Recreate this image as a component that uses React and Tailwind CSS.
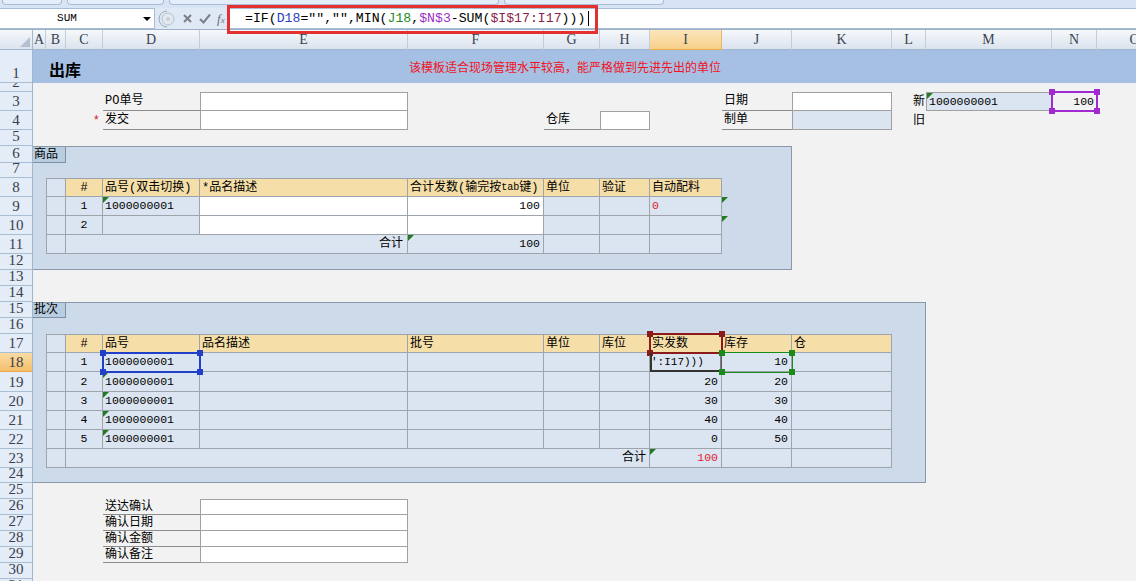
import React from "react";

const ROWS = [
  { n: 1, h: "h-[33px]" }, { n: 2, h: "h-[9px]" }, { n: 3, h: "h-[19px]" }, { n: 4, h: "h-[19px]" },
  { n: 5, h: "h-[16px]" }, { n: 6, h: "h-[17px]" }, { n: 7, h: "h-[15px]" }, { n: 8, h: "h-[19px]" },
  { n: 9, h: "h-[19px]" }, { n: 10, h: "h-[19px]" }, { n: 11, h: "h-[19px]" }, { n: 12, h: "h-[16px]" },
  { n: 13, h: "h-[16px]" }, { n: 14, h: "h-[16px]" }, { n: 15, h: "h-[16px]" }, { n: 16, h: "h-[16px]" },
  { n: 17, h: "h-[19px]" }, { n: 18, h: "h-[19px]", on: true }, { n: 19, h: "h-[20px]" }, { n: 20, h: "h-[19px]" },
  { n: 21, h: "h-[19px]" }, { n: 22, h: "h-[19px]" }, { n: 23, h: "h-[19px]" }, { n: 24, h: "h-[15px]" },
  { n: 25, h: "h-[16px]" }, { n: 26, h: "h-[16px]" }, { n: 27, h: "h-[16px]" }, { n: 28, h: "h-[16px]" },
  { n: 29, h: "h-[16px]" }, { n: 30, h: "h-[16px]" }, { n: 31, h: "h-[16px]" },
];

const COLS = [
  { l: "A", w: "w-[13px]" }, { l: "B", w: "w-[20px]" }, { l: "C", w: "w-[37px]" }, { l: "D", w: "w-[97px]" },
  { l: "E", w: "w-[208px]" }, { l: "F", w: "w-[136px]" }, { l: "G", w: "w-[56px]" }, { l: "H", w: "w-[50px]" },
  { l: "I", w: "w-[72px]", on: true }, { l: "J", w: "w-[70px]" }, { l: "K", w: "w-[100px]" }, { l: "L", w: "w-[34px]" },
  { l: "M", w: "w-[126px]" }, { l: "N", w: "w-[45px]" }, { l: "O", w: "w-[76px]" },
];

const HD = "bg-[#f5dea8]";
const WH = "bg-white";
const CTR = "justify-center";
const RT = "justify-end pr-[3px]";

const Tri = () => (
  <span className="absolute left-0 top-0 w-0 h-0 border-t-[6px] border-r-[6px] border-t-[#217a21] border-r-transparent" />
);

const Num = ({ children, red }) => (
  <span className={`text-[11.5px] ${red ? "text-[#e0202e]" : ""}`}>{children}</span>
);

function Cell({ at, bg = "bg-[#dbe5f1]", edge = "", align = "justify-start pl-[2px]", children }) {
  return (
    <div
      className={`${at} ${bg} ${edge} ${align} relative flex items-center overflow-hidden whitespace-nowrap border-r border-b border-[#9ea4ab]`}
    >
      {children}
    </div>
  );
}

// label with underline (form rows)
const Label = ({ at, children }) => (
  <div className={`${at} flex items-center pl-[2px] border-b border-[#8c8c8c] whitespace-nowrap`}>{children}</div>
);

function Handles({ color }) {
  return (
    <>
      <span className={`absolute -left-[3px] -top-[3px] w-[6px] h-[6px] ${color}`} />
      <span className={`absolute -right-[3px] -top-[3px] w-[6px] h-[6px] ${color}`} />
      <span className={`absolute -left-[3px] -bottom-[3px] w-[6px] h-[6px] ${color}`} />
      <span className={`absolute -right-[3px] -bottom-[3px] w-[6px] h-[6px] ${color}`} />
    </>
  );
}

function TopBar() {
  return (
    <>
      {/* ribbon remnants */}
      <div className="h-[8px] bg-[#d6e4f5] flex gap-[5px] px-[2px]">
        <div className="w-[60px] h-[5px] rounded-b-[4px] border-x border-b border-[#a9bdd6] bg-[#e4eefa]" />
        <div className="w-[97px] h-[5px] rounded-b-[4px] border-x border-b border-[#a9bdd6] bg-[#e4eefa]" />
        <div className="w-[330px] h-[5px] rounded-b-[4px] border-x border-b border-[#a9bdd6] bg-[#e4eefa]" />
        <div className="w-[160px] h-[5px] rounded-b-[4px] border-x border-b border-[#a9bdd6] bg-[#e4eefa]" />
      </div>
      {/* formula bar */}
      <div className="h-[22px] flex bg-[#dfe9f6] border-b border-[#9db1c9]">
        <div className="w-[155px] bg-white border-y border-r border-[#a8bcd4] relative flex items-center">
          <span className="flex-1 text-center pr-[20px] text-[11px] font-['Liberation_Mono',monospace]">SUM</span>
          <span className="absolute right-[3px] top-[8px] w-0 h-0 border-l-[4px] border-r-[4px] border-t-[4px] border-l-transparent border-r-transparent border-t-black" />
        </div>
        <div className="w-[74px] flex items-center gap-[6px] pl-[3px]">
          <svg width="18" height="18" viewBox="0 0 18 18">
            <path d="M9 1 A8 8 0 0 0 9 17" fill="none" stroke="#9aa9ba" />
            <circle cx="10" cy="9" r="6" fill="#e3e8ee" stroke="#b6c0cc" />
            <circle cx="10" cy="9" r="2" fill="#c6ced8" />
          </svg>
          <svg width="11" height="11" viewBox="0 0 11 11">
            <path d="M2 2 L9 9 M9 2 L2 9" stroke="#7b7f86" strokeWidth="2" />
          </svg>
          <svg width="12" height="11" viewBox="0 0 12 11">
            <path d="M1 6 L4.5 9.5 L11 1.5" fill="none" stroke="#7b7f86" strokeWidth="2" />
          </svg>
          <span className="italic font-['Liberation_Serif',serif] text-[13px] text-[#6b6f75] leading-none">
            f<span className="text-[9px]">x</span>
          </span>
        </div>
        <div className="flex-1 bg-white border-l border-y border-[#a8bcd4] flex items-center pl-[15px] font-['Liberation_Mono',monospace] text-[13.2px] whitespace-nowrap">
          <span>=IF(</span>
          <span className="text-[#2a3fc4]">D18</span>
          <span>{'="","",MIN('}</span>
          <span className="text-[#1f8a2a]">J18</span>
          <span>,</span>
          <span className="text-[#9b30c8]">$N$3</span>
          <span>-SUM(</span>
          <span className="text-[#8a1f4a]">$I$17:I17</span>
          <span>)))</span>
          <span className="inline-block w-px h-[15px] bg-black ml-[3px]" />
        </div>
      </div>
    </>
  );
}

function ColumnHeader() {
  return (
    <div className="h-[20px] flex shrink-0 font-['Liberation_Serif',serif] text-[14px] text-[#3a4350]">
      <div className="w-[33px] shrink-0 relative bg-linear-to-b from-[#f6f8fb] to-[#dbe3ee] border-r border-b border-[#9eb6ce]">
        <span className="absolute right-[2px] bottom-[2px] w-0 h-0 border-l-[10px] border-t-[10px] border-l-transparent border-t-transparent border-r-0 border-b-[10px] border-b-[#b3c0d1]" />
      </div>
      {COLS.map((c) => (
        <div
          key={c.l}
          className={`${c.w} shrink-0 flex items-center justify-center border-r border-b ${
            c.on
              ? "bg-linear-to-b from-[#fce6bb] to-[#f7cf88] border-r-[#e2b66a] border-b-[#eeac45]"
              : "bg-linear-to-b from-[#f6f8fb] to-[#dbe3ee] border-r-[#c3cdda] border-b-[#9eb6ce]"
          }`}
        >
          {c.l}
        </div>
      ))}
    </div>
  );
}

function RowHeader() {
  return (
    <div className="w-[33px] shrink-0 flex flex-col border-r border-[#9eb6ce] font-['Liberation_Serif',serif] text-[#36404d]">
      {ROWS.map((r) => (
        <div
          key={r.n}
          className={`${r.h} shrink-0 flex items-end justify-center overflow-hidden border-b ${
            r.on ? "bg-linear-to-b from-[#fbdca4] to-[#f4bf6a] border-[#e7a648]" : "bg-[#e4ecf7] border-[#a9bdd5]"
          }`}
        >
          <span className="text-[15px] leading-none pb-[1px]">{r.n}</span>
        </div>
      ))}
    </div>
  );
}

function Sheet() {
  return (
    <div className="grid grid-cols-[13px_20px_37px_97px_208px_136px_56px_50px_72px_70px_100px_34px_126px_45px_76px] grid-rows-[33px_9px_19px_19px_16px_17px_15px_19px_19px_19px_19px_16px_16px_16px_16px_16px_19px_19px_20px_19px_19px_19px_19px_15px_16px_16px_16px_16px_16px_16px_16px] bg-[#f2f2f2] font-['Liberation_Mono','Noto_Sans_CJK_SC',monospace] text-[12px] text-black leading-[14px]">
      {/* Title band */}
      <div className="col-start-1 col-end-16 row-start-1 bg-[#a6c0e4]" />
      <div className="col-start-2 col-span-4 row-start-1 flex items-center pt-[5px] pl-[3px] font-['Noto_Sans_CJK_SC',sans-serif] font-bold text-[16px]">
        出库
      </div>
      <div className="col-start-6 col-end-10 row-start-1 flex items-center justify-center pt-[4px] text-[#f0141e] whitespace-nowrap">
        该模板适合现场管理水平较高，能严格做到先进先出的单位
      </div>

      {/* Header form */}
      <Label at="col-start-4 row-start-3">PO单号</Label>
      <div className="col-start-5 row-start-3 bg-white border border-[#a0a0a0]" />
      <div className="col-start-3 row-start-4 flex items-center justify-end pr-[3px] text-[#d0202a]">*</div>
      <Label at="col-start-4 row-start-4">发交</Label>
      <div className="col-start-5 row-start-4 bg-white border-x border-b border-[#a0a0a0]" />
      <Label at="col-start-7 row-start-4">仓库</Label>
      <div className="col-start-8 row-start-4 bg-white border border-[#a0a0a0]" />
      <Label at="col-start-10 row-start-3">日期</Label>
      <Label at="col-start-10 row-start-4">制单</Label>
      <div className="col-start-11 row-start-3 bg-white border border-[#a0a0a0]" />
      <div className="col-start-11 row-start-4 bg-[#dbe5f1] border-x border-b border-[#a0a0a0]" />
      <div className="col-start-12 row-start-3 flex items-center justify-end pr-[1px]">新</div>
      <div className="col-start-12 row-start-4 flex items-center justify-end pr-[1px]">旧</div>
      <div className="col-start-13 row-start-3 relative bg-[#dbe5f1] border border-[#a0a0a0] flex items-center pl-[2px]">
        <Tri />
        <Num>1000000001</Num>
      </div>
      <div className="col-start-14 row-start-3 flex items-center justify-end pr-[3px]">
        <Num>100</Num>
      </div>
      <div className="col-start-14 row-start-3 relative">
        <div className="absolute -inset-px border-2 border-[#a02ad0]" />
        <Handles color="bg-[#a02ad0]" />
      </div>

      {/* 商品 panel */}
      <div className="col-start-1 col-end-11 row-start-6 row-end-13 bg-[#ccdaea] border-y border-r border-[#8a98ab]" />
      <div className="col-start-1 col-span-2 row-start-6 mt-px bg-[#b9cde0] border-r border-b border-[#7d8fa6] flex items-center pl-[1px]">
        商品
      </div>

      <Cell at="col-start-2 row-start-8" edge="border-l border-t" />
      <Cell at="col-start-3 row-start-8" bg={HD} edge="border-t" align={CTR}>#</Cell>
      <Cell at="col-start-4 row-start-8" bg={HD} edge="border-t">品号(双击切换)</Cell>
      <Cell at="col-start-5 row-start-8" bg={HD} edge="border-t">*品名描述</Cell>
      <Cell at="col-start-6 row-start-8" bg={HD} edge="border-t">
        合计发数(输完按<span className="text-[10px]">tab</span>键)
      </Cell>
      <Cell at="col-start-7 row-start-8" bg={HD} edge="border-t">单位</Cell>
      <Cell at="col-start-8 row-start-8" bg={HD} edge="border-t">验证</Cell>
      <Cell at="col-start-9 row-start-8" bg={HD} edge="border-t">自动配料</Cell>

      <Cell at="col-start-2 row-start-9" edge="border-l" />
      <Cell at="col-start-3 row-start-9" align={CTR}><Num>1</Num></Cell>
      <Cell at="col-start-4 row-start-9"><Tri /><Num>1000000001</Num></Cell>
      <Cell at="col-start-5 row-start-9" bg={WH} />
      <Cell at="col-start-6 row-start-9" bg={WH} align={RT}><Num>100</Num></Cell>
      <Cell at="col-start-7 row-start-9" />
      <Cell at="col-start-8 row-start-9" />
      <Cell at="col-start-9 row-start-9"><Num red>0</Num></Cell>
      <div className="col-start-10 row-start-9 relative"><Tri /></div>

      <Cell at="col-start-2 row-start-10" edge="border-l" />
      <Cell at="col-start-3 row-start-10" align={CTR}><Num>2</Num></Cell>
      <Cell at="col-start-4 row-start-10" />
      <Cell at="col-start-5 row-start-10" bg={WH} />
      <Cell at="col-start-6 row-start-10" bg={WH} />
      <Cell at="col-start-7 row-start-10" />
      <Cell at="col-start-8 row-start-10" />
      <Cell at="col-start-9 row-start-10" />
      <div className="col-start-10 row-start-10 relative"><Tri /></div>

      <Cell at="col-start-2 row-start-11" edge="border-l" />
      <Cell at="col-start-3 col-span-3 row-start-11" align="justify-end pr-[4px]">合计</Cell>
      <Cell at="col-start-6 row-start-11" align={RT}><Tri /><Num>100</Num></Cell>
      <Cell at="col-start-7 row-start-11" />
      <Cell at="col-start-8 row-start-11" />
      <Cell at="col-start-9 row-start-11" />

      {/* 批次 panel */}
      <div className="col-start-1 col-end-13 row-start-15 row-end-25 bg-[#ccdaea] border-y border-r border-[#8a98ab]" />
      <div className="col-start-1 col-span-2 row-start-15 mt-px bg-[#b9cde0] border-r border-b border-[#7d8fa6] flex items-center pl-[1px]">
        批次
      </div>

      <Cell at="col-start-2 row-start-17" edge="border-l border-t" />
      <Cell at="col-start-3 row-start-17" bg={HD} edge="border-t" align={CTR}>#</Cell>
      <Cell at="col-start-4 row-start-17" bg={HD} edge="border-t">品号</Cell>
      <Cell at="col-start-5 row-start-17" bg={HD} edge="border-t">品名描述</Cell>
      <Cell at="col-start-6 row-start-17" bg={HD} edge="border-t">批号</Cell>
      <Cell at="col-start-7 row-start-17" bg={HD} edge="border-t">单位</Cell>
      <Cell at="col-start-8 row-start-17" bg={HD} edge="border-t">库位</Cell>
      <Cell at="col-start-9 row-start-17" bg={HD} edge="border-t">实发数</Cell>
      <Cell at="col-start-10 row-start-17" bg={HD} edge="border-t">库存</Cell>
      <Cell at="col-start-11 row-start-17" bg={HD} edge="border-t">仓</Cell>

      <Cell at="col-start-2 row-start-18" edge="border-l" />
      <Cell at="col-start-3 row-start-18" align={CTR}><Num>1</Num></Cell>
      <Cell at="col-start-4 row-start-18"><Num>1000000001</Num></Cell>
      <Cell at="col-start-5 row-start-18" />
      <Cell at="col-start-6 row-start-18" />
      <Cell at="col-start-7 row-start-18" />
      <Cell at="col-start-8 row-start-18" />
      <Cell at="col-start-9 row-start-18" align="justify-start pl-[1px]">
        <span className="text-[11px]">':I17)))</span>
      </Cell>
      <Cell at="col-start-10 row-start-18" align={RT}><Num>10</Num></Cell>
      <Cell at="col-start-11 row-start-18" />

      <Cell at="col-start-2 row-start-19" edge="border-l" />
      <Cell at="col-start-3 row-start-19" align={CTR}><Num>2</Num></Cell>
      <Cell at="col-start-4 row-start-19"><Tri /><Num>1000000001</Num></Cell>
      <Cell at="col-start-5 row-start-19" />
      <Cell at="col-start-6 row-start-19" />
      <Cell at="col-start-7 row-start-19" />
      <Cell at="col-start-8 row-start-19" />
      <Cell at="col-start-9 row-start-19" align={RT}><Num>20</Num></Cell>
      <Cell at="col-start-10 row-start-19" align={RT}><Num>20</Num></Cell>
      <Cell at="col-start-11 row-start-19" />

      <Cell at="col-start-2 row-start-20" edge="border-l" />
      <Cell at="col-start-3 row-start-20" align={CTR}><Num>3</Num></Cell>
      <Cell at="col-start-4 row-start-20"><Tri /><Num>1000000001</Num></Cell>
      <Cell at="col-start-5 row-start-20" />
      <Cell at="col-start-6 row-start-20" />
      <Cell at="col-start-7 row-start-20" />
      <Cell at="col-start-8 row-start-20" />
      <Cell at="col-start-9 row-start-20" align={RT}><Num>30</Num></Cell>
      <Cell at="col-start-10 row-start-20" align={RT}><Num>30</Num></Cell>
      <Cell at="col-start-11 row-start-20" />

      <Cell at="col-start-2 row-start-21" edge="border-l" />
      <Cell at="col-start-3 row-start-21" align={CTR}><Num>4</Num></Cell>
      <Cell at="col-start-4 row-start-21"><Tri /><Num>1000000001</Num></Cell>
      <Cell at="col-start-5 row-start-21" />
      <Cell at="col-start-6 row-start-21" />
      <Cell at="col-start-7 row-start-21" />
      <Cell at="col-start-8 row-start-21" />
      <Cell at="col-start-9 row-start-21" align={RT}><Num>40</Num></Cell>
      <Cell at="col-start-10 row-start-21" align={RT}><Num>40</Num></Cell>
      <Cell at="col-start-11 row-start-21" />

      <Cell at="col-start-2 row-start-22" edge="border-l" />
      <Cell at="col-start-3 row-start-22" align={CTR}><Num>5</Num></Cell>
      <Cell at="col-start-4 row-start-22"><Tri /><Num>1000000001</Num></Cell>
      <Cell at="col-start-5 row-start-22" />
      <Cell at="col-start-6 row-start-22" />
      <Cell at="col-start-7 row-start-22" />
      <Cell at="col-start-8 row-start-22" />
      <Cell at="col-start-9 row-start-22" align={RT}><Num>0</Num></Cell>
      <Cell at="col-start-10 row-start-22" align={RT}><Num>50</Num></Cell>
      <Cell at="col-start-11 row-start-22" />

      <Cell at="col-start-2 row-start-23" edge="border-l" />
      <Cell at="col-start-3 col-span-6 row-start-23" align="justify-end pr-[3px]">合计</Cell>
      <Cell at="col-start-9 row-start-23" align={RT}><Tri /><Num red>100</Num></Cell>
      <Cell at="col-start-10 row-start-23" />
      <Cell at="col-start-11 row-start-23" />

      {/* range highlights */}
      <div className="col-start-9 row-start-17 relative">
        <div className="absolute -inset-px border-2 border-[#8b1a1a]" />
        <Handles color="bg-[#8b1a1a]" />
      </div>
      <div className="col-start-9 row-start-18 relative">
        <div className="absolute inset-0 border-l-2 border-b-2 border-r-2 border-l-[#333] border-b-[#333] border-r-[#c050c8]" />
        <span className="absolute -right-[3px] -bottom-[3px] w-[6px] h-[6px] bg-[#e8a8e8] border border-[#c050c8]" />
      </div>
      <div className="col-start-10 row-start-18 relative">
        <div className="absolute -inset-px border border-[#1a8a1a]" />
        <Handles color="bg-[#1a8a1a]" />
      </div>
      <div className="col-start-4 row-start-18 relative">
        <div className="absolute -inset-px border-2 border-[#2040c8]" />
        <Handles color="bg-[#2040c8]" />
      </div>

      {/* Confirmation block */}
      <Label at="col-start-4 row-start-26">送达确认</Label>
      <Label at="col-start-4 row-start-27">确认日期</Label>
      <Label at="col-start-4 row-start-28">确认金额</Label>
      <Label at="col-start-4 row-start-29">确认备注</Label>
      <div className="col-start-5 row-start-26 bg-white border border-[#a0a0a0]" />
      <div className="col-start-5 row-start-27 bg-white border-x border-b border-[#a0a0a0]" />
      <div className="col-start-5 row-start-28 bg-white border-x border-b border-[#a0a0a0]" />
      <div className="col-start-5 row-start-29 bg-white border-x border-b border-[#a0a0a0]" />
    </div>
  );
}

export default function App() {
  return (
    <div className="relative w-[1136px] h-[581px] overflow-hidden bg-[#f2f2f2] flex flex-col">
      <TopBar />
      <ColumnHeader />
      <div className="flex flex-1 overflow-hidden">
        <RowHeader />
        <Sheet />
      </div>
      {/* red annotation frame around the formula */}
      <div className="absolute left-[227px] top-[5px] w-[371px] h-[29px] border-[3px] border-[#e3312f] pointer-events-none" />
    </div>
  );
}
